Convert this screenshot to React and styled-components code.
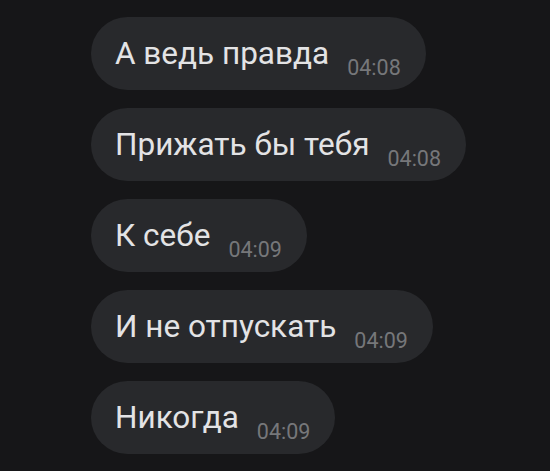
import React from "react";
import styled, { createGlobalStyle } from "styled-components";

const Global = createGlobalStyle`
  html, body {
    margin: 0;
    padding: 0;
    background: #161618;
  }
  body {
    font-family: Roboto, "Noto Sans", "DejaVu Sans", sans-serif;
  }
`;

const Chat = styled.div`
  display: flex;
  flex-direction: column;
  align-items: flex-start;
  gap: 18px;
  padding: 17px 0 0 91px;
  min-height: 471px;
  box-sizing: border-box;
`;

const Bubble = styled.div`
  background: #28292c;
  border-radius: 37px;
  height: 73px;
  line-height: 73px;
  padding: 0 25px 0 24px;
  white-space: nowrap;
`;

const Text = styled.span`
  color: #e3e3e5;
  font-size: 31.5px;
`;

const Time = styled.span`
  color: #76777a;
  font-size: 21.5px;
  line-height: 1;
  margin-left: 18px;
  vertical-align: -11px;
`;

const messages = [
  { text: "А ведь правда", time: "04:08" },
  { text: "Прижать бы тебя", time: "04:08" },
  { text: "К себе", time: "04:09" },
  { text: "И не отпускать", time: "04:09" },
  { text: "Никогда", time: "04:09" },
];

export default function App() {
  return (
    <>
      <Global />
      <Chat>
        {messages.map((m, i) => (
          <Bubble key={i}>
            <Text>{m.text}</Text>
            <Time>{m.time}</Time>
          </Bubble>
        ))}
      </Chat>
    </>
  );
}
